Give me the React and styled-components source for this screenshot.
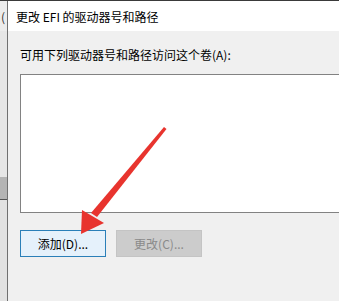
import React from 'react'
import styled, { createGlobalStyle } from 'styled-components'

const Global = createGlobalStyle`
  html, body {
    margin: 0;
    padding: 0;
    background: #f0f0f0;
  }
  body {
    font-family: "Noto Sans CJK SC", "Noto Sans", sans-serif;
  }
`

const Page = styled.div`
  position: relative;
  display: flex;
  width: 339px;
  height: 301px;
  overflow: hidden;
  border-top: 1px solid #3a3a3a;
  box-sizing: border-box;
`

const BackWindow = styled.div`
  width: 7px;
  flex: none;
  display: flex;
  flex-direction: column;
  background: #e4e4e4;
  border-right: 1px solid #707070;
`

const BackTitle = styled.div`
  height: 30px;
  display: flex;
  align-items: center;
  padding-left: 1px;
  font-size: 12px;
  color: #333;
  background: #ececec;
  overflow: hidden;
`

const BackGap = styled.div`
  height: ${p => p.h}px;
  background: ${p => p.bg};
  border-bottom: ${p => (p.line ? '1px solid #555' : 'none')};
`

const Dialog = styled.div`
  flex: 1;
  display: flex;
  flex-direction: column;
  min-width: 0;
`

const TitleBar = styled.div`
  height: 30px;
  display: flex;
  align-items: center;
  padding-left: 8px;
  background: #fff;
  font-size: 12px;
  color: #000;
  white-space: nowrap;
`

const Body = styled.div`
  flex: 1;
  background: #f0f0f0;
  padding: 16px 0 0 12px;
  display: flex;
  flex-direction: column;
`

const Label = styled.div`
  font-size: 12px;
  line-height: 16px;
  color: #000;
  white-space: nowrap;
`

const ListBox = styled.div`
  margin-top: 11px;
  margin-right: -20px;
  height: 139px;
  box-sizing: border-box;
  background: #fff;
  border: 1px solid #828282;
`

const Buttons = styled.div`
  display: flex;
  gap: 10px;
  margin-top: 17px;
`

const Button = styled.div`
  width: 86px;
  height: 27px;
  box-sizing: border-box;
  display: flex;
  align-items: center;
  justify-content: center;
  font-size: 12px;
  color: ${p => (p.disabled ? '#8a8a8a' : '#000')};
  background: ${p => (p.disabled ? '#cccccc' : '#e5f1fb')};
  border: 1px solid ${p => (p.disabled ? '#c4c4c4' : '#2a7fb8')};
`

const Arrow = styled.svg`
  position: absolute;
  left: 0;
  top: 0;
  pointer-events: none;
`

export default function App() {
  return (
    <>
      <Global />
      <Page>
        <BackWindow>
          <BackTitle>(</BackTitle>
          <BackGap h={146} bg="#e6e6e6" />
          <BackGap h={22} bg="#b4b4b4" line />
          <BackGap h={101} bg="#e2e2e2" />
        </BackWindow>
        <Dialog>
          <TitleBar>更改 EFI 的驱动器号和路径</TitleBar>
          <Body>
            <Label>可用下列驱动器号和路径访问这个卷(A):</Label>
            <ListBox />
            <Buttons>
              <Button>添加(D)...</Button>
              <Button disabled>更改(C)...</Button>
            </Buttons>
          </Body>
        </Dialog>
        <Arrow width="339" height="301" viewBox="0 0 339 301">
          <polygon points="164,126 166.5,128 97,216 91,212" fill="#e8342e" />
          <polygon points="82,209 104,222 81,233" fill="#e8342e" />
        </Arrow>
      </Page>
    </>
  )
}
